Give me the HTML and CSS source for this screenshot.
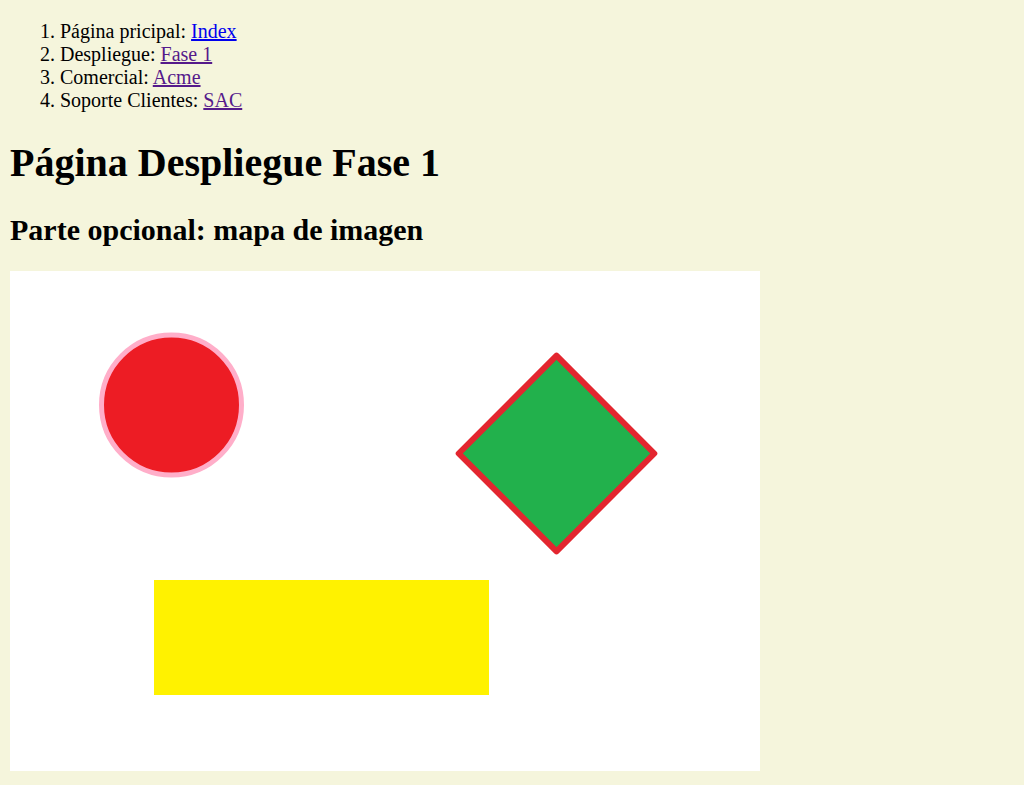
FILE: index.html
```html
<!DOCTYPE html>
<html lang="es">
<head>
<meta charset="utf-8">
<title>Página Despliegue Fase 1</title>
<link rel="stylesheet" href="styles.css">
</head>
<body>
<ol class="nav">
  <li>Página pricipal: <a class="link" href="#">Index</a></li>
  <li>Despliegue: <a class="link visited" href="#">Fase 1</a></li>
  <li>Comercial: <a class="link visited" href="#">Acme</a></li>
  <li>Soporte Clientes: <a class="link visited" href="#">SAC</a></li>
</ol>
<h1 class="title">Página Despliegue Fase 1</h1>
<h2 class="subtitle">Parte opcional: mapa de imagen</h2>
<svg class="imagemap" width="750" height="500" viewBox="0 0 750 500" xmlns="http://www.w3.org/2000/svg">
  <rect x="0" y="0" width="750" height="500" fill="#ffffff"/>
  <circle cx="161.5" cy="134" r="70" fill="#ed1c24" stroke="#ffaec9" stroke-width="5"/>
  <polygon points="546.5,84.7 644.3,182.5 546.5,280.3 448.7,182.5" fill="#22b14c" stroke="#e3262f" stroke-width="6" stroke-linejoin="round"/>
  <rect x="144" y="309" width="335" height="115" fill="#fff200"/>
</svg>
</body>
</html>
```

FILE: styles.css
```css
html {
  background: #f5f5dc;
}
body {
  margin: 0 10px 10px;
  font-family: "Liberation Serif", "Times New Roman", serif;
  font-size: 20px;
  color: #000;
}
.nav {
  margin: 0;
  padding: 20px 0 0 50px;
}
.link {
  color: #0000ee;
  text-decoration: underline;
}
.link.visited {
  color: #551a8b;
}
.title {
  font-size: 40px;
  font-weight: bold;
  margin: 26.8px 0;
}
.subtitle {
  font-size: 30px;
  font-weight: bold;
  margin: 24.9px 0;
}
.imagemap {
  display: block;
}
```
